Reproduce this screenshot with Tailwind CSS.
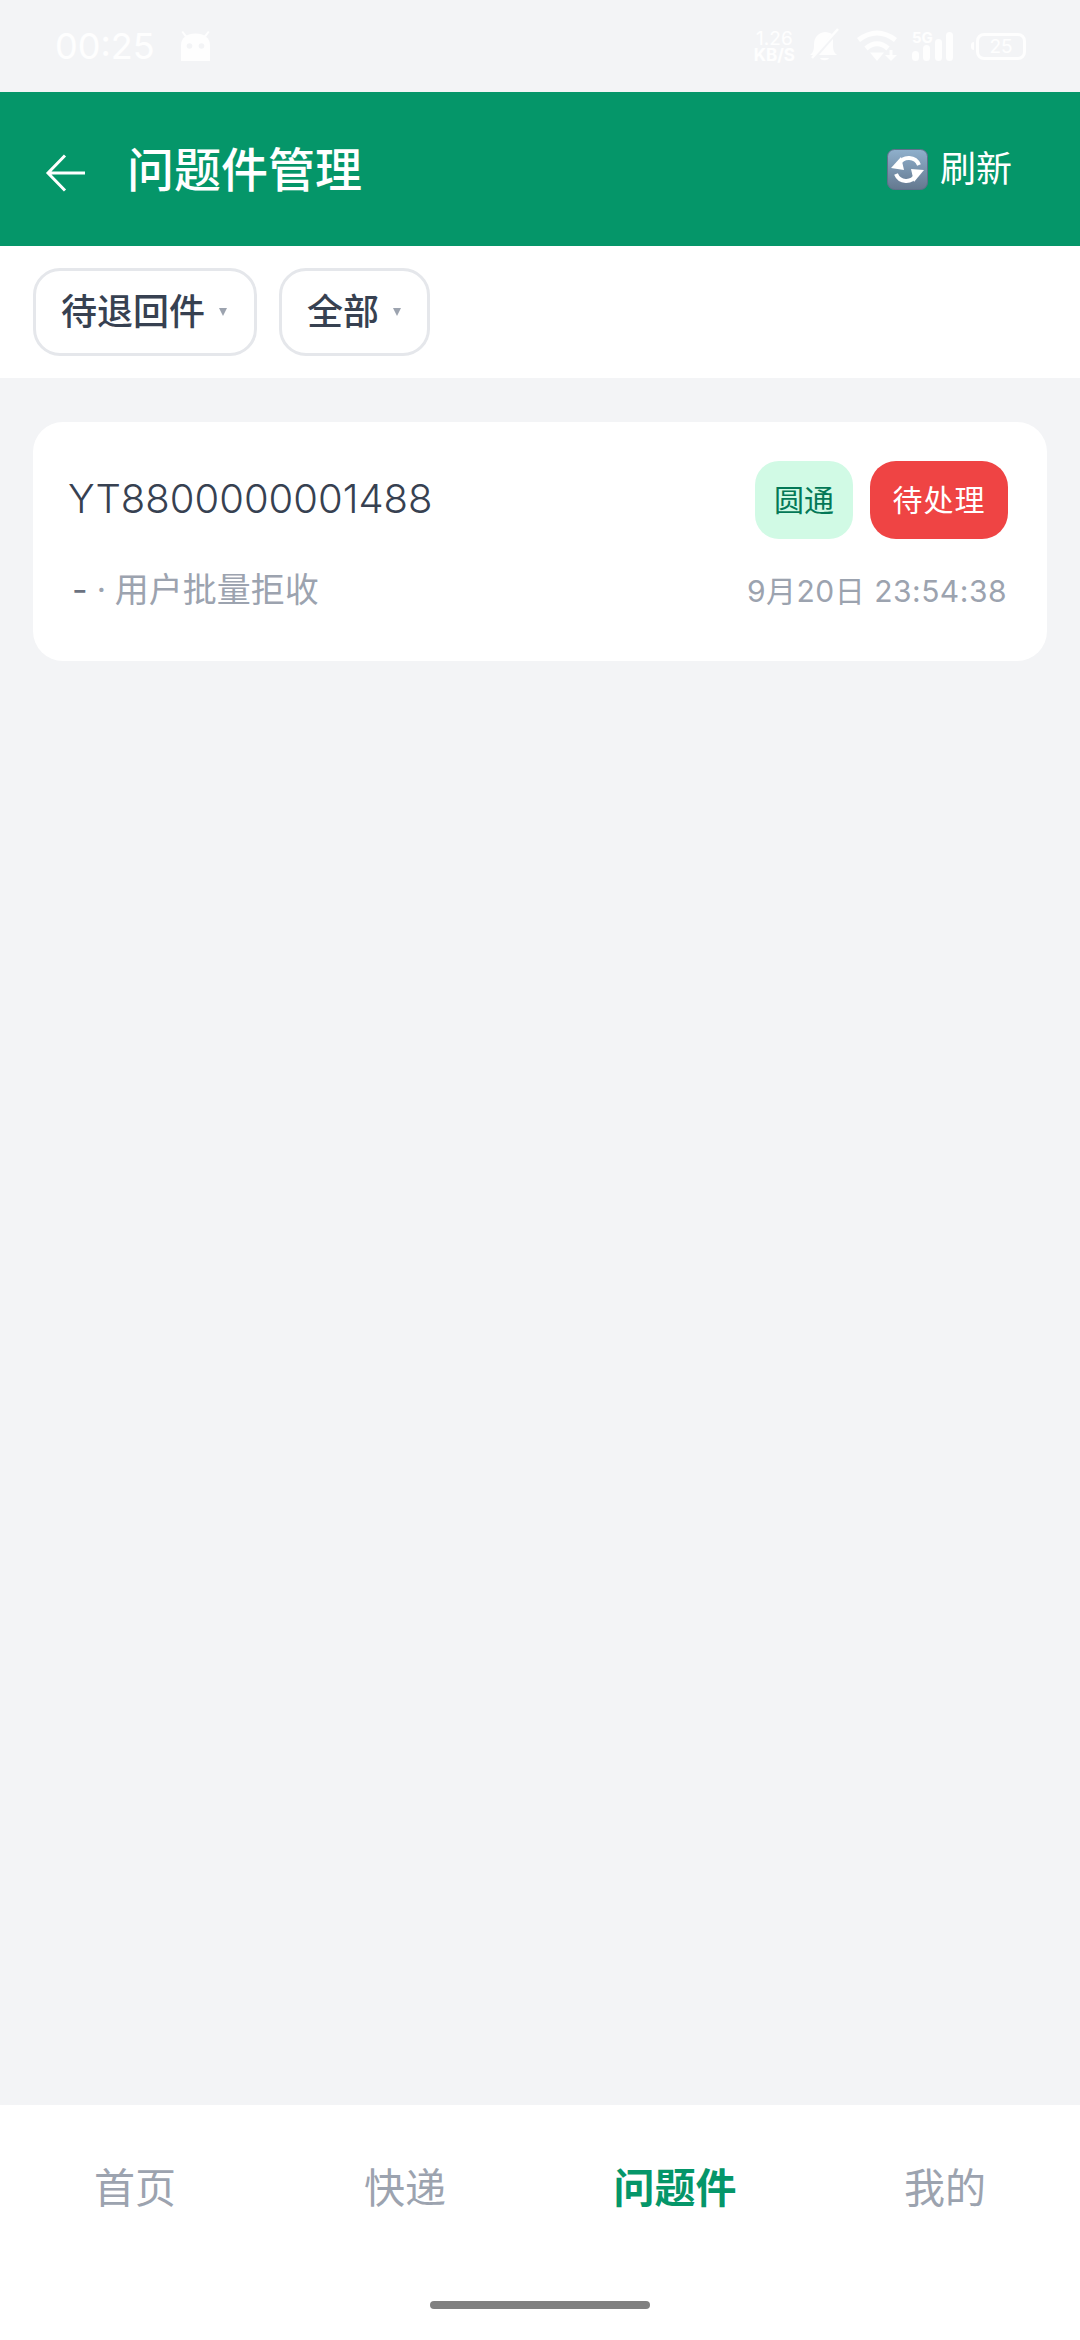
<!DOCTYPE html>
<html lang="zh-CN">
<head>
    <meta charset="UTF-8">
    <meta name="viewport" content="width=device-width, initial-scale=1.0">
    <title>问题件管理</title>
    <script src="https://cdn.jsdelivr.net/npm/@tailwindcss/browser@4"></script>
</head>
<body class="bg-[#f3f4f6] font-['Inter','Noto_Sans_CJK_SC',sans-serif]">
<div class="w-[1080px] h-[2340px] flex flex-col overflow-hidden">

    <!-- status bar -->
    <div class="h-[92px] shrink-0 flex items-center pl-[55px] pr-[54px] text-white/90">
        <span class="text-[36px] leading-none">00:25</span>
        <svg class="ml-[25px]" width="31" height="30" viewBox="0 0 31 30" fill="currentColor">
            <path d="M1 30V14C1 7 7 2.500 15.500 2.500S30 7 30 14V30Z"/>
            <path d="M3 0l4 5-2 1-3.500-5zM28 0l-4 5 2 1 3.500-5z"/>
            <circle cx="9.500" cy="15" r="2.800" fill="#f3f4f6"/>
            <circle cx="21.500" cy="15" r="2.800" fill="#f3f4f6"/>
        </svg>
        <div class="ml-auto flex items-center">
            <div class="flex flex-col items-center font-bold mt-[1px]">
                <span class="text-[19px] font-normal leading-[18px]">1.26</span>
                <span class="text-[17px] leading-[15px]">KB/S</span>
            </div>
            <svg class="ml-[14px]" width="30" height="36" viewBox="0 0 30 36" fill="currentColor">
                <path d="M1 27c3-2 4-5 4-10C5 9 9 5 16 4c3 0 5 1 7 2L5 27ZM24 11v7c0 4 1 7 4 9H10Z"/>
                <path d="M11 30h9c-1 3-8 3-9 0Z"/>
                <path d="M3 30 29 1" stroke="currentColor" stroke-width="2.500"/>
            </svg>
            <svg class="ml-[18px]" width="40" height="32" viewBox="0 0 40 32" fill="none" stroke="currentColor">
                <path d="M1.500 10Q20-4 38.500 10" stroke-width="5"/>
                <path d="M9 18.500Q20 9 31 18.500" stroke-width="5"/>
                <path d="M13 22.500H27L20 31Z" fill="currentColor" stroke="none"/>
                <path d="M34 20v6" stroke-width="3"/>
                <path d="M28 25h12l-6 6Z" fill="currentColor" stroke="none"/>
            </svg>
            <div class="ml-[15px] relative w-[41px] h-[30px] flex items-end justify-between">
                <span class="absolute left-0 top-[-1px] text-[15px] leading-none font-bold">5G</span>
                <span class="w-[7px] h-[10px] rounded-full bg-current"></span>
                <span class="w-[7px] h-[16px] rounded-full bg-current"></span>
                <span class="w-[7px] h-[22px] rounded-full bg-current"></span>
                <span class="w-[7px] h-[29px] rounded-full bg-current"></span>
            </div>
            <div class="ml-[18px] w-[3px] h-[8px] rounded-l-full bg-current"></div>
            <div class="ml-[2px] w-[50px] h-[27px] rounded-[8px] border-[3px] border-current flex items-center justify-center text-[19px] leading-none">25</div>
        </div>
    </div>

    <!-- header -->
    <div class="h-[154px] shrink-0 bg-[#059669] flex items-center pl-[45px] pr-[68px] text-white">
        <svg class="mt-[8px]" width="40" height="38" viewBox="0 0 40 38" fill="none" stroke="currentColor" stroke-width="3">
            <path d="M20 1.500 3 19l17 17.500M3 19h37"/>
        </svg>
        <h1 class="ml-[42px] text-[47px] leading-none font-medium">问题件管理</h1>
        <div class="ml-auto flex items-center">
            <svg width="41" height="41" viewBox="0 0 41 41">
                <defs>
                    <linearGradient id="emojiBg" x1="0" y1="0" x2="0" y2="1">
                        <stop offset="0" stop-color="#8fb0cc"/>
                        <stop offset="1" stop-color="#64788f"/>
                    </linearGradient>
                </defs>
                <rect x="0.500" y="0.500" width="40" height="40" rx="7" fill="url(#emojiBg)" stroke="#5f6f8a"/>
                <path d="M12 15A11 11 0 0 1 32 16" fill="none" stroke="#fff" stroke-width="4"/>
                <path d="M4 19 17 21 14 8Z" fill="#fff"/>
                <path d="M29 26A11 11 0 0 1 9 25" fill="none" stroke="#fff" stroke-width="4"/>
                <path d="M37 21 24 20 27 33Z" fill="#fff"/>
            </svg>
            <span class="ml-[12px] text-[36px] leading-none">刷新</span>
        </div>
    </div>

    <!-- filters -->
    <div class="h-[132px] shrink-0 bg-white flex items-center gap-[22px] pl-[33px]">
        <div class="w-[224px] h-[88px] rounded-[27px] border-[3px] border-[#e5e7eb] flex items-center pl-[25px] text-[#374151] text-[36px] font-medium">
            <span>待退回件</span>
            <span class="ml-[14px] w-0 h-0 border-x-[4px] border-t-[8px] border-x-transparent border-t-[#9ca3af]"></span>
        </div>
        <div class="w-[151px] h-[88px] rounded-[27px] border-[3px] border-[#e5e7eb] flex items-center pl-[25px] text-[#374151] text-[36px] font-medium">
            <span>全部</span>
            <span class="ml-[14px] w-0 h-0 border-x-[4px] border-t-[8px] border-x-transparent border-t-[#9ca3af]"></span>
        </div>
    </div>

    <!-- list -->
    <div class="flex-1 px-[33px] pt-[44px]">
        <div class="h-[239px] bg-white rounded-[30px] pl-[35px] pr-[39px] pt-[39px]">
            <div class="flex items-center justify-between">
                <span class="text-[40px] font-light text-[#374151] leading-none mb-[3px]">YT8800000001488</span>
                <div class="flex gap-[17px]">
                    <span class="w-[98px] h-[78px] rounded-[24px] bg-[#d1fae5] text-[#047857] text-[30px] flex items-center justify-center">圆通</span>
                    <span class="w-[138px] h-[78px] rounded-[26px] bg-[#ef4444] text-white text-[30px] tracking-[1px] flex items-center justify-center">待处理</span>
                </div>
            </div>
            <div class="flex items-center justify-between mt-[34px]">
                <div class="flex items-center text-[34px] leading-none text-[#9ca3af] ml-[4px]">
                    <span class="text-[#6b7280]">-</span>
                    <span class="ml-[9px] text-[32px]">·</span>
                    <span class="ml-[9px]">用户批量拒收</span>
                </div>
                <span class="text-[30px] leading-none text-[#9ca3af] tracking-[0.5px] mr-[1px] mt-[2px]">9月20日 23:54:38</span>
            </div>
        </div>
    </div>

    <!-- bottom nav -->
    <div class="h-[235px] shrink-0 bg-white relative">
        <div class="grid grid-cols-4 pt-[63px] text-[41px] leading-none text-[#9ca3af] text-center">
            <span>首页</span>
            <span>快递</span>
            <span class="text-[#059669] font-bold">问题件</span>
            <span>我的</span>
        </div>
        <div class="absolute left-[430px] top-[196px] w-[220px] h-[8px] rounded-full bg-[#808080]"></div>
    </div>
</div>
</body>
</html>
